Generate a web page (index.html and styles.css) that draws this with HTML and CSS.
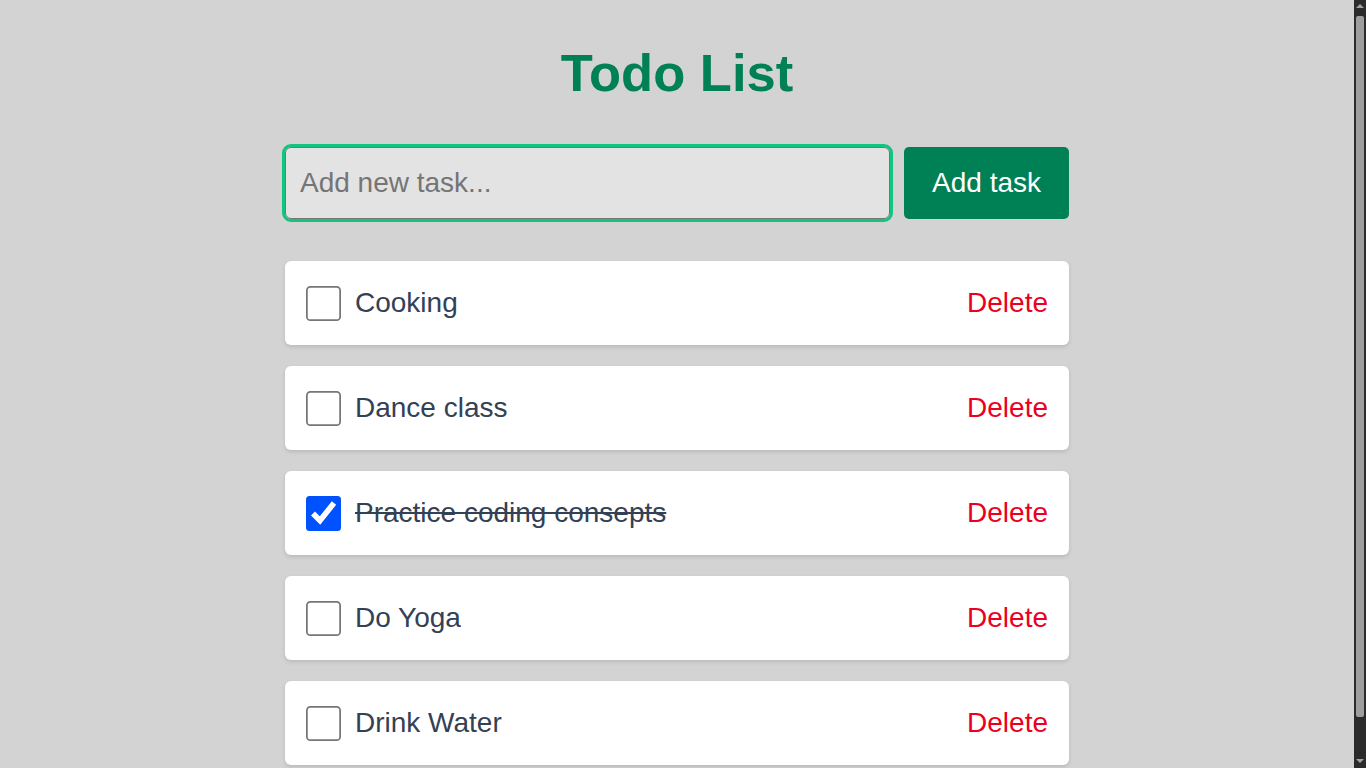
FILE: index.html
```html
<!DOCTYPE html>
<html lang="en">
<head>
<meta charset="utf-8">
<title>Todo List</title>
<link rel="stylesheet" href="styles.css">
</head>
<body>
<main class="app">
  <h1 class="title">Todo List</h1>
  <form class="add-row" onsubmit="return false">
    <input class="task-input" type="text" placeholder="Add new task...">
    <button class="add-btn" type="submit">Add task</button>
  </form>
  <ul class="list">
    <li class="card">
      <input class="check" type="checkbox">
      <span class="label">Cooking</span>
      <button class="delete" type="button">Delete</button>
    </li>
    <li class="card">
      <input class="check" type="checkbox">
      <span class="label">Dance class</span>
      <button class="delete" type="button">Delete</button>
    </li>
    <li class="card">
      <input class="check" type="checkbox" checked>
      <span class="label done">Practice coding consepts</span>
      <button class="delete" type="button">Delete</button>
    </li>
    <li class="card">
      <input class="check" type="checkbox">
      <span class="label">Do Yoga</span>
      <button class="delete" type="button">Delete</button>
    </li>
    <li class="card">
      <input class="check" type="checkbox">
      <span class="label">Drink Water</span>
      <button class="delete" type="button">Delete</button>
    </li>
  </ul>
</main>
<div class="scrollbar" aria-hidden="true">
  <span class="arrow up"></span>
  <span class="thumb"></span>
  <span class="arrow down"></span>
</div>
</body>
</html>
```
FILE: styles.css
```css
html {
  background: #d3d3d3;
}
body {
  margin: 0;
  padding-right: 12px;
  background: #d3d3d3;
  font-family: "Liberation Sans", Arial, sans-serif;
  color: #334155;
}
.app {
  width: 784px;
  margin: 0 auto;
  padding: 42px 0 21px;
}
.title {
  margin: 0 0 44px;
  text-align: center;
  font-size: 52.5px;
  font-weight: 700;
  color: #008055;
}
.add-row {
  display: flex;
  gap: 14px;
  margin: 0 0 42px;
}
.task-input {
  flex: 1;
  height: 72px;
  box-sizing: border-box;
  border: 1px solid #767676;
  border-radius: 6px;
  outline: 3px solid #12c47f;
  background: #e3e3e3;
  padding: 0 14px;
  font-family: inherit;
  font-size: 28px;
  color: #334155;
}
.task-input::placeholder {
  color: #757575;
}
.add-btn {
  height: 72px;
  padding: 0 28px;
  border: none;
  border-radius: 5px;
  background: #008055;
  color: #fff;
  font-family: inherit;
  font-size: 28px;
  cursor: pointer;
}
.list {
  list-style: none;
  margin: 0;
  padding: 0;
}
.card {
  display: flex;
  align-items: center;
  height: 84px;
  box-sizing: border-box;
  padding: 0 21px;
  margin-bottom: 21px;
  background: #fff;
  border-radius: 6px;
  box-shadow: 0 2px 4px rgba(0, 0, 0, 0.12);
}
.check {
  zoom: 1.75;
  width: 20px;
  height: 20px;
  margin: 0 8px 0 0;
  accent-color: #0052ff;
  flex: none;
}
.label {
  flex: 1;
  font-size: 28px;
}
.label.done {
  text-decoration: line-through;
}
.delete {
  border: none;
  background: transparent;
  padding: 0;
  color: #eb0021;
  font-family: inherit;
  font-size: 28px;
  cursor: pointer;
}
.scrollbar {
  position: fixed;
  top: 0;
  right: 0;
  width: 12px;
  height: 100vh;
  background: #2b2b2b;
  display: flex;
  flex-direction: column;
  align-items: center;
}
.arrow {
  width: 0;
  height: 0;
  border-left: 4px solid transparent;
  border-right: 4px solid transparent;
}
.arrow.up {
  margin-top: 4px;
  border-bottom: 4px solid #a3a3a3;
}
.arrow.down {
  margin-top: auto;
  margin-bottom: 5px;
  border-top: 4px solid #a3a3a3;
}
.thumb {
  margin-top: 8px;
  width: 8px;
  height: 701px;
  border-radius: 2px;
  background: #9e9e9e;
}
```
